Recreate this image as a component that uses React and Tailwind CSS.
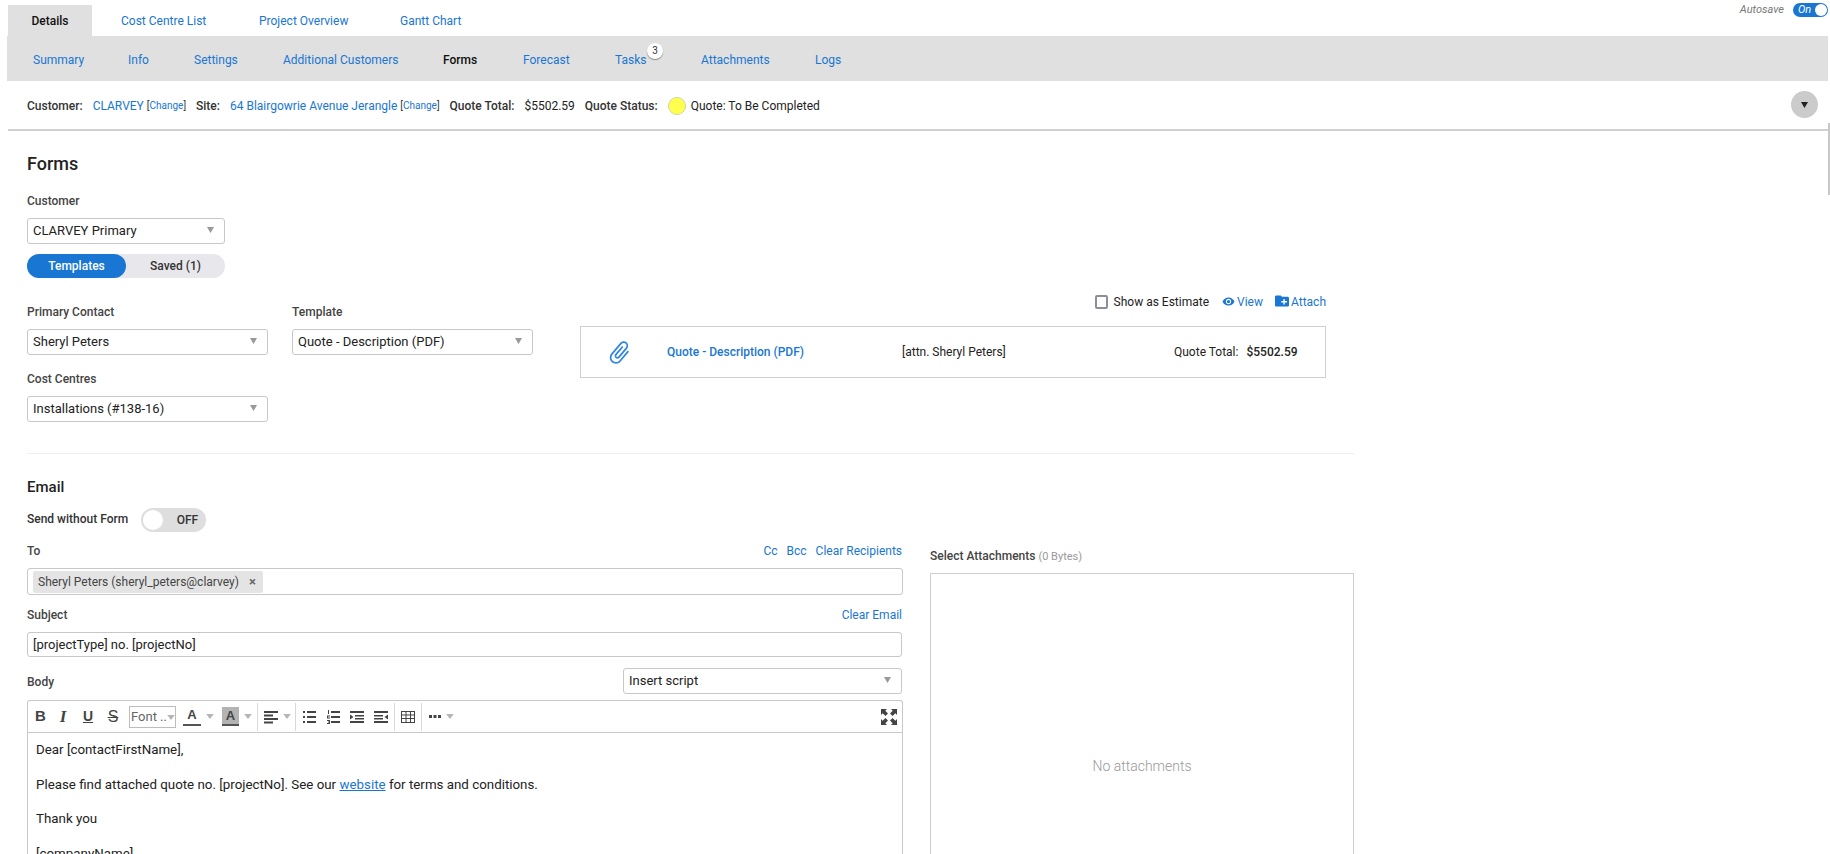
import React from 'react';

const topTabs = ['Cost Centre List', 'Project Overview', 'Gantt Chart'];
const subTabs = [
  { label: 'Summary', width: 'w-[95px]' },
  { label: 'Info', width: 'w-[66px]' },
  { label: 'Settings', width: 'w-[89px]' },
  { label: 'Additional Customers', width: 'w-[160px]' },
  { label: 'Forms', width: 'w-[80px]', active: true },
  { label: 'Forecast', width: 'w-[92px]' },
  { label: 'Tasks', width: 'w-[86px]', badge: 3 },
  { label: 'Attachments', width: 'w-[114px]' },
  { label: 'Logs', width: 'w-[40px]' },
];

function Select({ value, className = '' }) {
  return (
    <div className={`flex h-[26px] items-center justify-between rounded-[3px] border border-[#c8c8c8] bg-white pl-[5px] pr-[10px] text-[13px] text-[#222] ${className}`}>
      <span>{value}</span>
      <svg width="7" height="6" viewBox="0 0 7 6" className="mb-[2px]"><path d="M0 0h7L3.500 6z" fill="#999" /></svg>
    </div>
  );
}

function Label({ children, className = '' }) {
  return <div className={`h-[16px] text-[12px] font-medium leading-[16px] text-[#444] ${className}`}>{children}</div>;
}

function Caret({ className = '' }) {
  return <svg width="8" height="5" viewBox="0 0 9 6" className={`h-[5px] w-[8px] ${className}`}><path d="M0 0h9L4.500 6z" fill="#b5b5b5" /></svg>;
}

function Lines({ children, width = 14 }) {
  return <svg width={width} height="14" viewBox={`0 0 ${width} 14`} fill="#444">{children}</svg>;
}

function Sep({ className = '' }) {
  return <span className={`h-[28px] w-px bg-[#d8d8d8] ${className}`} />;
}

function Toolbar() {
  return (
    <div className="flex h-[32px] items-center border-b border-[#c8c8c8] pl-[2px] pr-[5px] text-[#444]">
      <span className="w-[21px] text-center font-['Liberation_Sans',sans-serif] text-[15px] font-bold">B</span>
      <span className="w-[24px] text-center font-['Liberation_Serif',serif] text-[17px] font-bold italic">I</span>
      <span className="w-[26px] text-center font-['Liberation_Sans',sans-serif] text-[14px] font-bold underline">U</span>
      <span className="w-[24px] text-center font-['Liberation_Sans',sans-serif] text-[16px] line-through">S</span>
      <div className="ml-[4px] flex h-[22px] w-[47px] items-center border border-[#bdbdbd] pl-[1px] text-[13px] text-[#666]">
        Font ..
        <Caret className="mt-[2px] h-[4px] w-[7px]" />
      </div>
      <div className="ml-[7px] flex w-[18px] flex-col items-center">
        <span className="font-['Liberation_Sans',sans-serif] text-[13px] font-bold leading-[14px]">A</span>
        <span className="mt-[2px] h-[2px] w-[18px] bg-[#555]" />
      </div>
      <Caret className="ml-[5px]" />
      <div className="ml-[8px] flex w-[17px] flex-col items-center">
        <span className="h-[17px] w-[17px] bg-[#b3b3b3] text-center font-['Liberation_Sans',sans-serif] text-[13px] font-bold leading-[17px]">A</span>
        <span className="h-[2px] w-[17px] bg-[#555]" />
      </div>
      <Caret className="ml-[5px]" />
      <Sep className="ml-[5px]" />
      <span className="ml-[6px] flex items-center">
        <Lines><path d="M0 1h14v2H0zM0 4.500h9v2H0zM0 8h14v2H0zM0 11.500h9v2H0z" /></Lines>
        <Caret className="ml-[5px]" />
      </span>
      <Sep className="ml-[4px]" />
      <span className="ml-[7px] flex items-center">
        <Lines width={13}><path d="M0 1h2v2H0zM4 1h9v2H4zM0 6h2v2H0zM4 6h9v2H4zM0 11h2v2H0zM4 11h9v2H4z" /></Lines>
        <span className="ml-[11px] flex">
          <Lines width={13}><path d="M4 1h9v2H4zM4 6h9v2H4zM4 11h9v2H4zM1 0h1v4H1zM0 5.500h3v1H1v1h2v1H0zM0 10h3v4H0v-1h2v-.500H1v-1h1V11H0z" /></Lines>
        </span>
        <span className="ml-[10px] flex">
          <Lines><path d="M0 1h14v2H0zM5 5h9v1.500H5zM5 8h9v1.500H5zM0 11h14v2H0zM0 4.500 3.500 7 0 9.500z" /></Lines>
        </span>
        <span className="ml-[10px] flex">
          <Lines><path d="M0 1h14v2H0zM0 5h9v1.500H0zM0 8h9v1.500H0zM0 11h14v2H0zM14 4.500 10.500 7 14 9.500z" /></Lines>
        </span>
      </span>
      <Sep className="ml-[6px]" />
      <span className="ml-[6px] flex">
        <svg width="14" height="14" viewBox="0 0 14 14" fill="none" stroke="#444" strokeWidth="1"><rect x=".5" y="1.500" width="13" height="11" /><path d="M.5 5h13M.5 8.500h13M5 1.500v11M9.500 1.500v11" /></svg>
      </span>
      <Sep className="ml-[6px]" />
      <span className="ml-[7px] flex items-center">
        <svg width="12" height="4" viewBox="0 0 12 4" fill="#444"><rect x="0" y="0" width="3" height="3" /><rect x="4.500" y="0" width="3" height="3" /><rect x="9" y="0" width="3" height="3" /></svg>
        <Caret className="ml-[5px]" />
      </span>
      <svg width="16" height="16" viewBox="0 0 16 16" fill="#444" className="ml-auto">
        <path d="M0 0h6L4.300 1.700 7 4.400 4.400 7 1.700 4.300 0 6zM16 0v6l-1.700-1.700L11.600 7 9 4.400l2.700-2.700L10 0zM0 16v-6l1.700 1.700L4.400 9 7 11.600l-2.700 2.700L6 16zM16 16h-6l1.700-1.700L9 11.600 11.600 9l2.700 2.700L16 10z" />
      </svg>
    </div>
  );
}

export default function App() {
  return (
    <div className="relative h-[854px] w-[1830px] overflow-hidden bg-white font-['Roboto',sans-serif] text-[13px] text-[#222]">
      {/* top tabs */}
      <div className="flex h-[36px] pl-[8px] pt-[5px] text-[12px]">
        <div className="flex h-[31px] w-[84px] items-center justify-center bg-[#e0e0e0] font-medium text-[#111]">Details</div>
        <div className="flex h-[31px] items-center pl-[29px] text-[#1976d2]">
          {topTabs.map((t, i) => (
            <span key={t} className={i === 0 ? 'w-[138px]' : i === 1 ? 'w-[141px]' : ''}>{t}</span>
          ))}
        </div>
        <div className="ml-auto flex h-[14px] -translate-y-[2px] items-center pr-[2px]">
          <span className="mr-[9px] text-[11px] italic text-[#777]">Autosave</span>
          <div className="flex h-[14px] w-[35px] items-center justify-between rounded-full bg-[#1976d2] pl-[5px] pr-[1px] text-[11px] italic text-white">
            On
            <span className="h-[12px] w-[12px] rounded-full bg-white" />
          </div>
        </div>
      </div>

      {/* sub navigation */}
      <div className="ml-[7px] mr-[2px] flex h-[45px] items-center bg-[#e0e0e0] pl-[26px] pt-[2px] text-[12px]">
        {subTabs.map((t) => (
          <span key={t.label} className={`relative ${t.width} ${t.active ? 'font-medium text-[#111]' : 'text-[#1976d2]'}`}>
            {t.label}
            {t.badge && (
              <span className="absolute left-[32px] -top-[8px] flex h-[16px] w-[16px] items-center justify-center rounded-full bg-white text-[10px] text-[#333] shadow-[0_1px_1px_rgba(0,0,0,0.4)]">{t.badge}</span>
            )}
          </span>
        ))}
      </div>

      {/* quote summary */}
      <div className="ml-[8px] mr-[2px] flex h-[50px] items-center border-b-2 border-[#d0d0d0] pl-[19px] pr-[10px] pt-[1px] text-[12px]">
        <span className="font-medium text-[#333]">Customer:</span>
        <span className="ml-[10px] text-[#1976d2]">CLARVEY</span>
        <span className="ml-[3px] text-[10px] text-[#1976d2]"><span className="text-[#333]">[</span>Change<span className="text-[#333]">]</span></span>
        <span className="ml-[10px] font-medium text-[#333]">Site:</span>
        <span className="ml-[10px] text-[#1976d2]">64 Blairgowrie Avenue Jerangle</span>
        <span className="ml-[3px] text-[10px] text-[#1976d2]"><span className="text-[#333]">[</span>Change<span className="text-[#333]">]</span></span>
        <span className="ml-[10px] font-medium text-[#333]">Quote Total:</span>
        <span className="ml-[10px]">$5502.59</span>
        <span className="ml-[10px] font-medium text-[#333]">Quote Status:</span>
        <span className="ml-[10px] h-[18px] w-[18px] rounded-full border border-[#d6d69a] bg-[#ffff4d]" />
        <span className="ml-[5px]">Quote: To Be Completed</span>
        <button className="ml-auto flex h-[27px] w-[27px] -translate-y-[1px] items-center justify-center rounded-full bg-[#cbcbcb]">
          <svg width="7" height="6" viewBox="0 0 7 6"><path d="M0 0h7L3.500 6z" fill="#222" /></svg>
        </button>
      </div>
      <div className="absolute right-0 top-[123px] h-[72px] w-[2px] bg-[#c8c8c8]" />

      <div className="w-[1354px] pl-[27px]">
        {/* forms */}
        <h2 className="mt-[21px] h-[24px] text-[18px] font-medium leading-[24px] text-[#222]">Forms</h2>
        <Label className="mt-[17px]">Customer</Label>
        <Select value="CLARVEY Primary" className="mt-[9px] w-[198px]" />
        <div className="mt-[10px] flex h-[24px] w-[198px] rounded-full bg-[#e8e8ec] text-[12px] font-medium">
          <div className="flex w-[99px] items-center justify-center rounded-full bg-[#1976d2] text-white">Templates</div>
          <div className="flex w-[99px] items-center justify-center text-[#333]">Saved (1)</div>
        </div>

        <div className="mt-[17px] flex">
          <div className="w-[553px] pt-[9px]">
            <div className="flex gap-[24px]">
              <div className="w-[241px]">
                <Label>Primary Contact</Label>
                <Select value="Sheryl Peters" className="mt-[9px]" />
                <Label className="mt-[16px]">Cost Centres</Label>
                <Select value="Installations (#138-16)" className="mt-[9px]" />
              </div>
              <div className="w-[241px]">
                <Label>Template</Label>
                <Select value="Quote - Description (PDF)" className="mt-[9px]" />
              </div>
            </div>
          </div>
          <div className="w-[746px]">
            <div className="flex h-[14px] items-center justify-end text-[12px]">
              <span className="h-[14px] w-[13px] rounded-[2px] border-2 border-[#8e8e9a]" />
              <span className="ml-[6px]">Show as Estimate</span>
              <svg width="13" height="13" viewBox="0 0 24 24" fill="#1976d2" className="mb-[2px] ml-[13px]">
                <path d="M12 4.500C7 4.500 2.730 7.610 1 12c1.730 4.390 6 7.500 11 7.500s9.270-3.110 11-7.500c-1.730-4.390-6-7.500-11-7.500zM12 17c-2.760 0-5-2.240-5-5s2.240-5 5-5 5 2.240 5 5-2.240 5-5 5zm0-8c-1.660 0-3 1.340-3 3s1.340 3 3 3 3-1.340 3-3-1.340-3-3-3z" />
              </svg>
              <span className="ml-[2px] text-[#1976d2]">View</span>
              <svg width="14" height="14" viewBox="2 4 20 16" fill="#1976d2" className="mb-[3px] ml-[12px]">
                <path d="M20 6h-8l-2-2H4c-1.110 0-1.990.890-1.990 2L2 18c0 1.110.890 2 2 2h16c1.110 0 2-.890 2-2V8c0-1.110-.890-2-2-2zm-1 8h-3v3h-2v-3h-3v-2h3V9h2v3h3v2z" />
              </svg>
              <span className="ml-[2px] text-[#1976d2]">Attach</span>
            </div>
            <div className="mt-[17px] flex h-[52px] items-center border border-[#d0d0d0] text-[12px]">
              <svg width="27" height="27" viewBox="0 0 24 24" fill="#2f86dd" className="ml-[25px] rotate-[40deg]">
                <path d="M16.500 6v11.500c0 2.210-1.790 4-4 4s-4-1.790-4-4V5c0-1.380 1.120-2.500 2.500-2.500s2.500 1.120 2.500 2.500v10.500c0 .550-.450 1-1 1s-1-.450-1-1V6H10v9.500c0 1.380 1.120 2.500 2.500 2.500s2.500-1.120 2.500-2.500V5c0-2.210-1.790-4-4-4S7 2.790 7 5v12.500c0 3.040 2.460 5.500 5.500 5.500s5.500-2.460 5.500-5.500V6h-1.500z" />
              </svg>
              <span className="ml-[34px] w-[235px] font-medium text-[#1976d2]">Quote - Description (PDF)</span>
              <span className="w-[272px]">[attn. Sheryl Peters]</span>
              <span>Quote Total:</span>
              <span className="ml-[8px] font-medium">$5502.59</span>
            </div>
          </div>
        </div>

        <div className="mt-[31px] h-px bg-[#eee]" />

        {/* email */}
        <h2 className="mt-[21px] h-[24px] text-[15px] font-medium leading-[24px] text-[#222]">Email</h2>
        <div className="mt-[9px] flex h-[24px] items-center">
          <span className="mb-[2px] text-[12px] font-medium text-[#333]">Send without Form</span>
          <div className="ml-[13px] flex h-[24px] w-[65px] items-center justify-between rounded-full bg-[#dedede] pl-[2px] pr-[8px] text-[12px] font-medium text-[#333]">
            <span className="h-[20px] w-[20px] rounded-full bg-white" />
            OFF
          </div>
        </div>

        <div className="flex justify-between">
          <div className="w-[876px]">
            <div className="mt-[11px] flex h-[16px] items-center justify-between pr-[1px] text-[12px]">
              <span className="font-medium text-[#444]">To</span>
              <span className="flex gap-[9px] text-[#1976d2]"><span>Cc</span><span>Bcc</span><span>Clear Recipients</span></span>
            </div>
            <div className="mt-[9px] flex h-[27px] items-center rounded-[3px] border border-[#c8c8c8] pl-[5px]">
              <div className="flex h-[22px] w-[230px] items-center rounded-[2px] bg-[#e4e4e4] pl-[5px] text-[12px] text-[#444]">
                Sheryl Peters (sheryl_peters@clarvey)
                <span className="ml-[10px] text-[13px] font-bold leading-none text-[#666]">×</span>
              </div>
            </div>
            <div className="mt-[12px] flex h-[16px] items-center justify-between pr-[1px] text-[12px]">
              <span className="font-medium text-[#444]">Subject</span>
              <span className="text-[#1976d2]">Clear Email</span>
            </div>
            <div className="mt-[9px] flex h-[25px] w-[875px] items-center rounded-[3px] border border-[#c8c8c8] pl-[5px]">[projectType] no. [projectNo]</div>
            <div className="mt-[11px] flex items-center justify-between pr-[1px]">
              <Label className="mt-[1px]">Body</Label>
              <Select value="Insert script" className="h-[25px] w-[279px]" />
            </div>
            <div className="mt-[6px] rounded-t-[3px] border border-[#c8c8c8] border-b-0">
              <Toolbar />
              <div className="h-[200px] pl-[8px] pt-[7px] text-[13.330px] leading-[20px] text-[#222]">
                <p className="mb-[14.500px]">Dear [contactFirstName],</p>
                <p className="mb-[14.500px]">Please find attached quote no. [projectNo]. See our <span className="text-[#1976d2] underline">website</span> for terms and conditions.</p>
                <p className="mb-[14.500px]">Thank you</p>
                <p>[companyName]</p>
              </div>
            </div>
          </div>
          <div className="w-[424px]">
            <div className="mt-[16px] h-[16px] text-[12px] leading-[16px]">
              <span className="font-medium text-[#444]">Select Attachments</span>
              <span className="ml-[3px] text-[11px] text-[#999]">(0 Bytes)</span>
            </div>
            <div className="mt-[9px] flex h-[386px] items-center justify-center border border-[#cfcfcf] text-[14px] font-light text-[#999]">No attachments</div>
          </div>
        </div>
      </div>
    </div>
  );
}
